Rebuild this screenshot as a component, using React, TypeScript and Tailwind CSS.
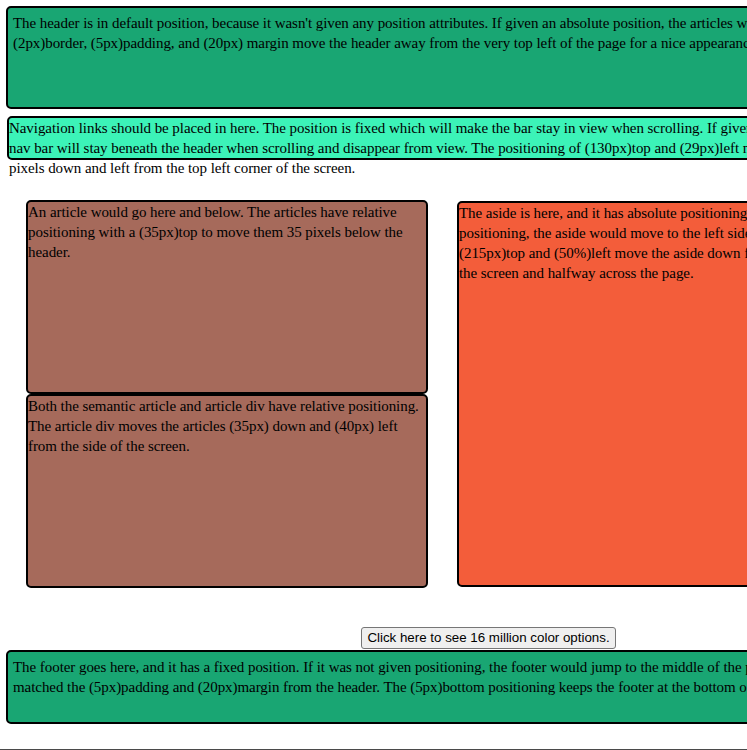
import React from "react";

const serif = "font-['Liberation_Serif','Times_New_Roman',serif] text-[15px] leading-[20px] tracking-[-0.06px] text-black";

export default function App() {
  const headerLines = [
    "The header is in default position, because it wasn't given any position attributes. If given an absolute position, the articles would cover it up.",
    "(2px)border, (5px)padding, and (20px) margin move the header away from the very top left of the page for a nice appearance.",
  ];
  const navLines = [
    "Navigation links should be placed in here. The position is fixed which will make the bar stay in view when scrolling. If given a relative position, the",
    "nav bar will stay beneath the header when scrolling and disappear from view. The positioning of (130px)top and (29px)left move the nav bar 130 and 29",
    "pixels down and left from the top left corner of the screen.",
  ];
  const article1 = [
    "An article would go here and below. The articles have relative",
    "positioning with a (35px)top to move them 35 pixels below the",
    "header.",
  ];
  const article2 = [
    "Both the semantic article and article div have relative positioning.",
    "The article div moves the articles (35px) down and (40px) left",
    "from the side of the screen.",
  ];
  const asideLines = [
    "The aside is here, and it has absolute positioning. If it was not given",
    "positioning, the aside would move to the left side of the page. The",
    "(215px)top and (50%)left move the aside down from the top of",
    "the screen and halfway across the page.",
  ];
  const footerLines = [
    "The footer goes here, and it has a fixed position. If it was not given positioning, the footer would jump to the middle of the page. It",
    "matched the (5px)padding and (20px)margin from the header. The (5px)bottom positioning keeps the footer at the bottom of the page.",
  ];

  const renderLines = (lines: string[]) =>
    lines.map((line, i) => (
      <div key={i} className="whitespace-nowrap">
        {line}
      </div>
    ));

  return (
    <div className={`w-[747px] h-[750px] overflow-hidden bg-white flex flex-col ${serif}`}>
      <header className="mt-[6px] ml-[6px] w-[1200px] h-[103px] shrink-0 border-2 border-black rounded-[5px] bg-[#19a673] p-[5px]">
        {renderLines(headerLines)}
      </header>

      <nav className="mt-[7px] ml-[7px] w-[1100px] h-[44px] shrink-0 border-2 border-black rounded-[5px] bg-[#3cf3b8]">
        {renderLines(navLines)}
      </nav>

      <div className="mt-[40px] flex items-start shrink-0">
        <div className="ml-[26px] w-[402px] shrink-0 flex flex-col">
          <article className="h-[194px] border-2 border-black rounded-[5px] bg-[#a66a5b] overflow-hidden">
            {renderLines(article1)}
          </article>
          <article className="h-[194px] border-2 border-black rounded-[5px] bg-[#a66a5b] overflow-hidden">
            {renderLines(article2)}
          </article>
        </div>
        <aside className="ml-[29px] mt-[1px] w-[500px] h-[386px] shrink-0 border-2 border-black rounded-[5px] bg-[#f35d3a]">
          {renderLines(asideLines)}
        </aside>
      </div>

      <div className="mt-[39px] ml-[361px] shrink-0">
        <button className="h-[22px] w-[255px] text-center whitespace-nowrap bg-[#efefef] border border-[#767676] rounded-[3px] font-['Liberation_Sans',Arial,sans-serif] text-[13.33px] leading-[16px] tracking-normal text-black">
          Click here to see 16 million color options.
        </button>
      </div>

      <footer className="mt-[1px] ml-[6px] w-[1200px] h-[74px] shrink-0 border-2 border-black rounded-[5px] bg-[#19a673] p-[5px]">
        {renderLines(footerLines)}
      </footer>

      <div className="mt-auto h-px w-full bg-[#4a4a4a] shrink-0" />
    </div>
  );
}
